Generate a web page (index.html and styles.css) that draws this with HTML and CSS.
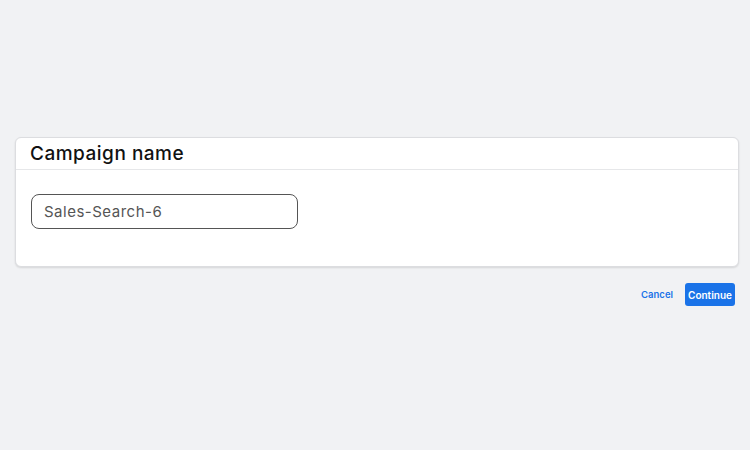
FILE: index.html
```html
<!DOCTYPE html>
<html lang="en">
<head>
    <meta charset="UTF-8">
    <title>Campaign name</title>
    <link rel="stylesheet" href="styles.css">
</head>
<body>
    <div class="page">
        <div class="card">
            <div class="card-header">
                <h2>Campaign name</h2>
            </div>
            <div class="card-body">
                <input class="name-input" type="text" value="Sales-Search-6">
            </div>
        </div>

        <div class="actions">
            <button class="btn-text">Cancel</button>
            <button class="btn-primary">Continue</button>
        </div>
    </div>
</body>
</html>
```

FILE: styles.css
```css
body {
    margin: 0;
    background-color: #f1f2f4;
    font-family: Inter, 'Open Sans', sans-serif;
    color: #202124;
}

.page {
    padding: 137px 11px 0 15px;
}

.card {
    background-color: #fff;
    border: 1px solid #dcdde0;
    border-radius: 6px;
    box-shadow: 0 1px 2px rgba(0, 0, 0, 0.12);
    box-sizing: border-box;
    height: 130px;
}

.card-header {
    height: 31px;
    border-bottom: 1px solid #e6e7e9;
    padding-left: 14px;
    display: flex;
    align-items: center;
}

.card-header h2 {
    margin: 0;
    font-size: 19px;
    font-weight: 500;
    letter-spacing: 0.5px;
    color: #111;
}

.card-body {
    padding: 24px 15px;
}

.name-input {
    width: 267px;
    height: 35px;
    box-sizing: border-box;
    border: 1.5px solid #555;
    border-radius: 8px;
    padding: 0 12px;
    font-family: inherit;
    font-size: 15px;
    letter-spacing: 0.5px;
    color: #555;
    outline: none;
}

.actions {
    display: flex;
    justify-content: flex-end;
    align-items: center;
    gap: 12px;
    margin-top: 16px;
    padding-right: 4px;
}

.btn-text {
    background: none;
    border: none;
    padding: 0;
    font-family: inherit;
    font-size: 9.5px;
    font-weight: 600;
    color: #1a73e8;
    cursor: pointer;
}

.btn-primary {
    background-color: #1a73e8;
    color: #fff;
    border: none;
    border-radius: 3px;
    width: 50px;
    height: 23px;
    padding: 0;
    font-family: inherit;
    font-size: 10px;
    font-weight: 600;
    cursor: pointer;
}
```
